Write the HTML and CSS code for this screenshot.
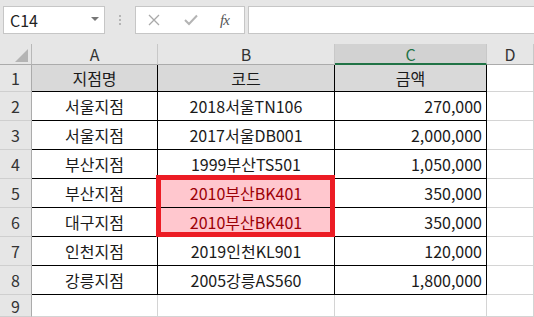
FILE: index.html
```html
<!DOCTYPE html>
<html lang="ko">

<head>
    <meta charset="UTF-8">
    <meta name="viewport" content="width=device-width, initial-scale=1.0">
    <link rel="stylesheet" href="styles.css">
    <title>지점 코드</title>
</head>

<body>
    <div class="formulaBar">
        <div class="nameBox">
            <span>C14</span>
            <span class="nameBox_arrow"></span>
        </div>
        <div class="grip"><i></i><i></i><i></i></div>
        <div class="fxButtons">
            <svg class="fxButtons_cancel" width="12" height="12" viewBox="0 0 12 12">
                <path d="M1 1 L11 11 M11 1 L1 11" stroke="#a9a9a9" stroke-width="1.3" fill="none" />
            </svg>
            <svg class="fxButtons_ok" width="14" height="12" viewBox="0 0 14 12">
                <path d="M1 6 L5 10 L13 1.5" stroke="#b4b4b4" stroke-width="2" fill="none" />
            </svg>
            <span class="fxButtons_fx">fx</span>
        </div>
        <div class="formulaInput"></div>
    </div>

    <div class="sheet">
        <div class="corner"><span></span></div>
        <div class="colHead">A</div>
        <div class="colHead">B</div>
        <div class="colHead colHead--active">C</div>
        <div class="colHead">D</div>

        <div class="rowHead">1</div>
        <div class="cell t th">지점명</div>
        <div class="cell t th">코드</div>
        <div class="cell t th">금액</div>
        <div class="cell"></div>

        <div class="rowHead">2</div>
        <div class="cell t">서울지점</div>
        <div class="cell t">2018서울TN106</div>
        <div class="cell t num">270,000</div>
        <div class="cell"></div>

        <div class="rowHead">3</div>
        <div class="cell t">서울지점</div>
        <div class="cell t">2017서울DB001</div>
        <div class="cell t num">2,000,000</div>
        <div class="cell"></div>

        <div class="rowHead">4</div>
        <div class="cell t">부산지점</div>
        <div class="cell t">1999부산TS501</div>
        <div class="cell t num">1,050,000</div>
        <div class="cell"></div>

        <div class="rowHead">5</div>
        <div class="cell t">부산지점</div>
        <div class="cell t dup dupFirst">2010부산BK401<span class="mark"></span></div>
        <div class="cell t num">350,000</div>
        <div class="cell"></div>

        <div class="rowHead">6</div>
        <div class="cell t">대구지점</div>
        <div class="cell t dup">2010부산BK401</div>
        <div class="cell t num">350,000</div>
        <div class="cell"></div>

        <div class="rowHead">7</div>
        <div class="cell t">인천지점</div>
        <div class="cell t">2019인천KL901</div>
        <div class="cell t num">120,000</div>
        <div class="cell"></div>

        <div class="rowHead">8</div>
        <div class="cell t">강릉지점</div>
        <div class="cell t">2005강릉AS560</div>
        <div class="cell t num">1,800,000</div>
        <div class="cell"></div>

        <div class="rowHead">9</div>
        <div class="cell"></div>
        <div class="cell"></div>
        <div class="cell"></div>
        <div class="cell"></div>
    </div>
</body>

</html>
```

FILE: styles.css
```css
body {
    margin: 0;
    padding: 0;
    background-color: #FFF;
    font-family: 'Noto Sans CJK KR', 'Noto Sans', sans-serif;
    font-size: 16px;
    color: #1a1a1a;
    overflow: hidden;
}

/* Barra de fórmulas */
.formulaBar {
    display: flex;
    align-items: flex-start;
    height: 44px;
    box-sizing: border-box;
    padding: 6px 0 0 3px;
    background-color: #e6e6e6;
}

.nameBox,
.fxButtons,
.formulaInput {
    height: 28px;
    box-sizing: border-box;
    background-color: #FFF;
    border: 1px solid #c6c6c6;
}

.nameBox {
    width: 102px;
    display: flex;
    align-items: center;
    justify-content: space-between;
    padding: 0 5px 0 6px;
    color: #222;
}

.nameBox_arrow {
    width: 0;
    height: 0;
    border-left: 4px solid transparent;
    border-right: 4px solid transparent;
    border-top: 4px solid #777;
    margin-bottom: 2px;
}

.grip {
    width: 30px;
    height: 28px;
    display: flex;
    flex-direction: column;
    align-items: center;
    justify-content: center;
    gap: 2px;
}

.grip i {
    width: 2px;
    height: 2px;
    background-color: #b5b5b5;
}

.fxButtons {
    width: 110px;
    display: flex;
    align-items: center;
    padding-left: 12px;
}

.fxButtons_cancel {
    margin-right: 24px;
}

.fxButtons_ok {
    margin-right: 22px;
}

.fxButtons_fx {
    font-family: 'Liberation Serif', serif;
    font-style: italic;
    font-size: 15px;
    color: #555;
    letter-spacing: -1px;
}

.formulaInput {
    flex: 1;
    margin-left: 3px;
    border-right: none;
}

/* Planilha */
.sheet {
    display: grid;
    grid-template-columns: 32px 126px 177px 152px 1fr;
    grid-template-rows: 21px 27px repeat(7, 29px) 22px;
}

.sheet > div {
    box-sizing: border-box;
    border-right: 1px solid #d4d4d4;
    border-bottom: 1px solid #d4d4d4;
    display: flex;
    align-items: center;
    justify-content: center;
    white-space: nowrap;
}

.corner {
    background-color: #e6e6e6;
    justify-content: flex-end !important;
    align-items: flex-end !important;
    padding: 0 3px 2px 0;
    border-right-color: #b8b8b8 !important;
    border-bottom-color: #ababab !important;
}

.corner span {
    width: 13px;
    height: 13px;
    background-color: #b4b4b4;
    clip-path: polygon(100% 0, 100% 100%, 0 100%);
}

.colHead {
    background-color: #e6e6e6;
    color: #333;
    border-right-color: #c8c8c8 !important;
    border-bottom-color: #ababab !important;
}

.colHead--active {
    background-color: #d2d2d2;
    color: #217346;
    border-bottom: 2px solid #217346 !important;
}

.rowHead {
    background-color: #e6e6e6;
    color: #333;
    border-right-color: #ababab !important;
    border-bottom-color: #cfcfcf !important;
}

.cell.t {
    border-right-color: #000;
    border-bottom-color: #000;
}

.cell.th {
    background-color: #d9d9d9;
}

.cell.num {
    justify-content: flex-end;
    padding-right: 4px;
}

.cell.dup {
    background-color: #ffc7ce;
    color: #9c0006;
}

.dupFirst {
    position: relative;
}

.mark {
    position: absolute;
    z-index: 2;
    left: -2px;
    top: -4px;
    width: 179px;
    height: 62px;
    box-sizing: border-box;
    border: 5px solid #ec1c24;
}
```
